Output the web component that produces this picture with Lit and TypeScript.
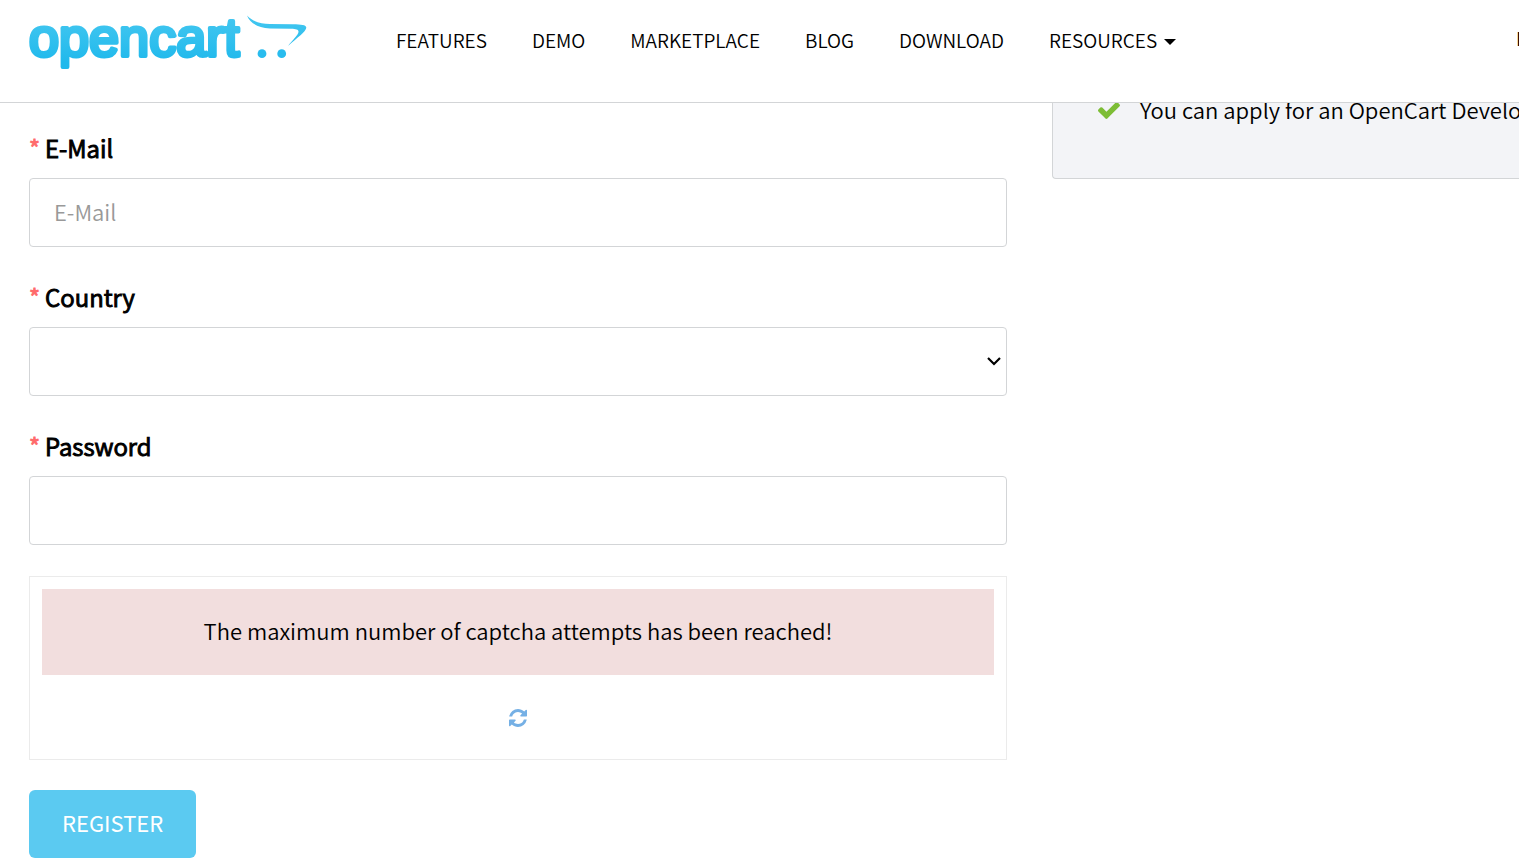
import { LitElement, html, css } from "lit";
import { customElement, property } from "lit/decorators.js";

const FONT = css`"Noto Sans CJK SC", "Noto Sans", sans-serif`;

@customElement("site-header")
class SiteHeader extends LitElement {
  static styles = css`
    :host {
      display: flex;
      box-sizing: border-box;
      height: 103px;
      padding: 0 0 20px 29px;
      align-items: center;
      overflow: hidden;
      background: #fff;
      border-bottom: 1px solid #d3d5d7;
      font: 350 19px/28px ${FONT};
    }
    a {
      color: #000;
      text-decoration: none;
      white-space: nowrap;
    }
    .logo {
      flex: none;
      width: 280px;
      height: 82px;
    }
    .logo svg {
      display: block;
    }
    .wordmark {
      font: 54px "Liberation Sans", Arial, sans-serif;
      fill: url(#brand);
      stroke: url(#brand);
      stroke-width: 4;
      stroke-linejoin: round;
    }
    nav {
      display: flex;
      flex: 1;
      gap: 45px;
      margin-left: 87px;
      padding-bottom: 2px;
    }
    .menu {
      display: flex;
      align-items: center;
      gap: 7px;
    }
    .caret {
      margin-top: 4px;
      border: 6px solid transparent;
      border-top-color: #000;
      border-bottom: 0;
    }
    .account {
      flex: none;
      width: 3px;
      padding-bottom: 6px;
    }
  `;

  links = ["Features", "Demo", "Marketplace", "Blog", "Download"];

  render() {
    return html`
      <a class="logo" href="#" aria-label="OpenCart">
        <svg width="280" height="82" viewBox="29 0 280 82">
          <defs>
            <linearGradient id="brand" gradientUnits="userSpaceOnUse" x1="0" y1="16" x2="0" y2="62">
              <stop offset="0" stop-color="#44c7f0" />
              <stop offset="1" stop-color="#20b9ec" />
            </linearGradient>
          </defs>
          <text class="wordmark" x="29" y="56">opencart</text>
          <path
            fill="url(#brand)"
            d="M247 15.5C253 22 261 23.6 270 24L293 24.2C301 24.3 306.3 24.8 306.3 27.6C306.3 31.500 297 38 288 46C292.500 40 298.500 35 298.500 31.8C298.500 29.500 296 29 291 28.8L270 28.4C257 27.500 250 23 247 15.5Z"
          />
          <circle cx="262" cy="53.7" r="4.4" fill="#29bcee" />
          <circle cx="281.7" cy="53.7" r="4.4" fill="#29bcee" />
        </svg>
      </a>
      <nav>
        ${this.links.map((l) => html`<a href="#">${l.toUpperCase()}</a>`)}
        <a class="menu" href="#">RESOURCES<span class="caret"></span></a>
      </nav>
      <a class="account" href="#">LOGIN</a>
    `;
  }
}

@customElement("form-field")
class FormField extends LitElement {
  static styles = css`
    :host {
      display: block;
      font: 350 22px/32px ${FONT};
    }
    label {
      display: flex;
      gap: 5px;
      padding-bottom: 12px;
      font-size: 24px;
      line-height: 36px;
      -webkit-text-stroke: 1px;
    }
    .star {
      color: #ff6b6b;
      line-height: 36px;
    }
    .control {
      display: block;
      box-sizing: border-box;
      width: 100%;
      height: 69px;
      padding: 0 24px 4px;
      border: 1px solid #d3d5d7;
      border-radius: 4px;
      background: #fff;
      color: #000;
      font: inherit;
    }
    .control::placeholder {
      color: #999;
      opacity: 1;
    }
    select.control {
      appearance: none;
      padding: 0 40px 0 20px;
    }
    .picker {
      display: grid;
      align-items: center;
    }
    .picker > * {
      grid-area: 1 / 1;
    }
    .picker svg {
      justify-self: end;
      margin-right: 5px;
      pointer-events: none;
    }
  `;

  @property() label = "";
  @property() type = "text";
  @property() hint = "";

  render() {
    return html`
      <label for="control"><span class="star">*</span><span>${this.label}</span></label>
      ${this.type === "select"
        ? html`<div class="picker">
            <select class="control" id="control"><option></option></select>
            <svg width="16" height="12" viewBox="0 0 16 12">
              <path d="M2 2L8 8L14 2" fill="none" stroke="#000" stroke-width="2.2" />
            </svg>
          </div>`
        : html`<input class="control" id="control" type=${this.type} placeholder=${this.hint} />`}
    `;
  }
}

@customElement("app-root")
class AppRoot extends LitElement {
  static styles = css`
    :host {
      display: block;
      overflow: hidden;
      color: #000;
      background: #fff;
      font: 350 22px/32px ${FONT};
    }
    main {
      display: grid;
      grid-template-columns: minmax(0, 1fr) 467px;
      gap: 45px;
      align-items: start;
      padding-left: 29px;
    }
    form {
      display: grid;
      gap: 30px;
      padding: 27px 0 10px;
    }
    .fields {
      display: grid;
      gap: 32px;
      padding-bottom: 1px;
    }
    .captcha {
      display: grid;
      justify-items: center;
      gap: 30px;
      padding: 12px 12px 28px;
      border: 1px solid #ebebeb;
    }
    .message {
      box-sizing: border-box;
      width: 100%;
      margin: 0;
      padding: 25px 24px 29px;
      background: #f2dede;
      text-align: center;
    }
    .refresh {
      padding: 4px;
      border: 0;
      background: none;
    }
    .refresh svg {
      display: block;
    }
    .register {
      justify-self: start;
      padding: 16px 33px 20px;
      border: 0;
      border-radius: 6px;
      background: #5bcaf1;
      color: #fff;
      font: inherit;
      font-weight: 400;
    }
    aside {
      display: flex;
      align-items: flex-start;
      gap: 20px;
      box-sizing: border-box;
      height: 76px;
      padding-left: 45px;
      overflow: hidden;
      border: 1px solid #d3d5d7;
      border-width: 0 0 1px 1px;
      border-radius: 0 0 0 4px;
      background: #f3f4f7;
      white-space: nowrap;
    }
    aside p {
      margin: -10px 0 0;
    }
    aside svg {
      flex: none;
      margin-top: -1px;
    }
  `;

  render() {
    return html`
      <site-header></site-header>
      <main>
        <form>
          <div class="fields">
            <form-field label="E-Mail" type="email" hint="E-Mail"></form-field>
            <form-field label="Country" type="select"></form-field>
            <form-field label="Password" type="password"></form-field>
          </div>
          <div class="captcha">
            <p class="message">The maximum number of captcha attempts has been reached!</p>
            <button class="refresh" type="button" aria-label="Refresh captcha">
              <svg width="18" height="18" viewBox="0 0 1536 1536" fill="#75b0e5">
                <path d="M1511 928q0 5-1 7-64 268-268 434.500T764 1536q-146 0-282.500-55T238 1324l-129 129q-19 19-45 19t-45-19-19-45V960q0-26 19-45t45-19h448q26 0 45 19t19 45-19 45l-137 137q71 66 161 102t187 36q134 0 250-65t186-179q11-17 53-117 8-23 30-23h192q13 0 22.500 9.500t9.500 22.500zm25-800v448q0 26-19 45t-45 19h-448q-26 0-45-19t-19-45 19-45l138-138Q969 256 768 256q-134 0-250 65T332 500q-11 17-53 117-8 23-30 23H50q-13 0-22.500-9.500T18 608v-7q65-268 270-434.500T768 0q146 0 284 55.500T1297 212l130-129q19-19 45-19t45 19 19 45z" />
              </svg>
            </button>
          </div>
          <button class="register" type="button">REGISTER</button>
        </form>
        <aside>
          <svg width="22" height="17" viewBox="121 334 1550 1188" fill="#7dbd36">
            <path d="M1671 566q0 40-28 68l-724 724-136 136q-28 28-68 28t-68-28l-136-136-362-362q-28-28-28-68t28-68l136-136q28-28 68-28t68 28l294 295 656-657q28-28 68-28t68 28l136 136q28 28 28 68z" />
          </svg>
          <p>You can apply for an OpenCart Developer account</p>
        </aside>
      </main>
    `;
  }
}
